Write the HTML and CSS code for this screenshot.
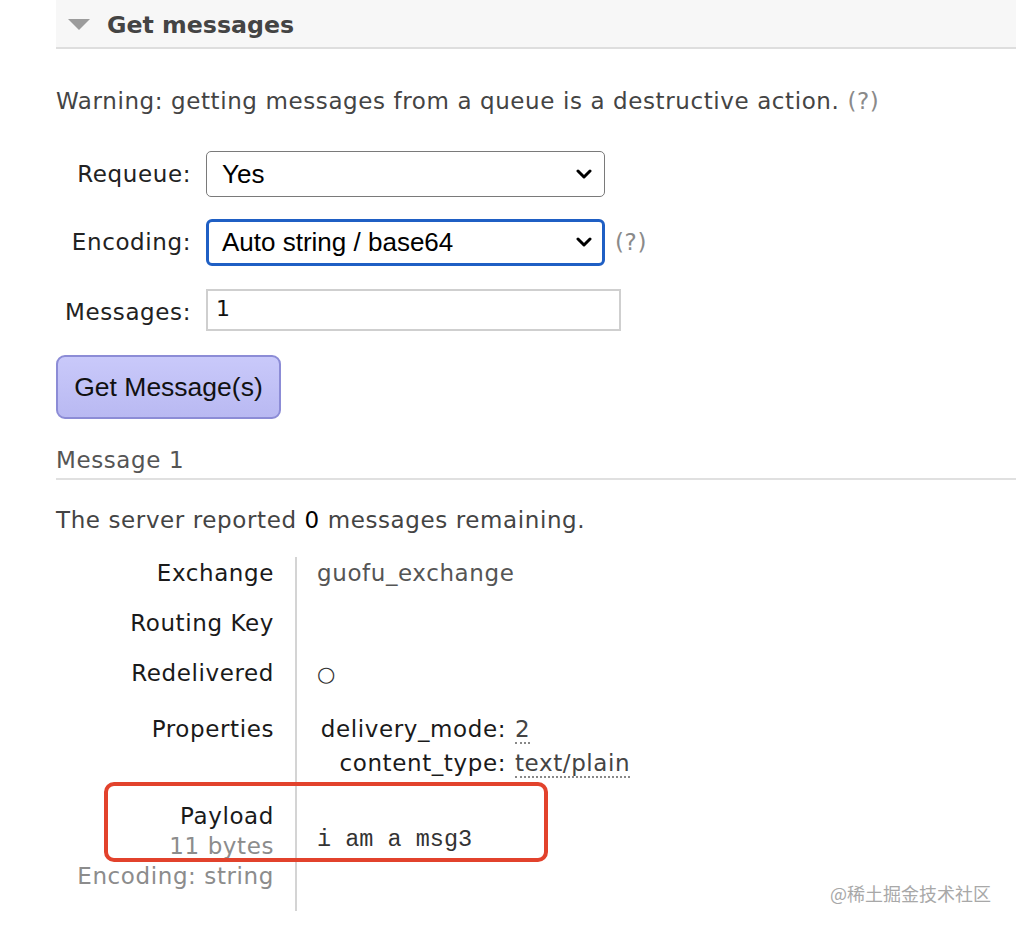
FILE: index.html
```html
<!DOCTYPE html>
<html>
<head>
<meta charset="utf-8">
<link rel="stylesheet" href="styles.css">
</head>
<body>
<div class="page">
  <h2 class="section-head"><span class="tri"></span>Get messages</h2>
  <p class="warning">Warning: getting messages from a queue is a destructive action. <span class="help">(?)</span></p>
  <div class="form">
    <label class="lbl">Requeue:</label>
    <div class="ctl"><div class="select"><span>Yes</span><svg class="chev" viewBox="0 0 16 10" width="16" height="10"><path d="M2 2 L8 8 L14 2" fill="none" stroke="#000" stroke-width="3" stroke-linecap="round" stroke-linejoin="round"/></svg></div></div>
    <label class="lbl">Encoding:</label>
    <div class="ctl"><div class="select focus"><span>Auto string / base64</span><svg class="chev" viewBox="0 0 16 10" width="16" height="10"><path d="M2 2 L8 8 L14 2" fill="none" stroke="#000" stroke-width="3" stroke-linecap="round" stroke-linejoin="round"/></svg></div><span class="help side">(?)</span></div>
    <label class="lbl lbl-msg">Messages:</label>
    <div class="ctl"><div class="input">1</div></div>
  </div>
  <button class="btn">Get Message(s)</button>
  <h3 class="msg-head">Message 1</h3>
  <p class="remaining">The server reported <b>0</b> messages remaining.</p>
  <div class="msg-table">
    <div class="row">
      <div class="k">Exchange</div>
      <div class="v">guofu_exchange</div>
    </div>
    <div class="row">
      <div class="k">Routing Key</div>
      <div class="v"></div>
    </div>
    <div class="row">
      <div class="k">Redelivered</div>
      <div class="v"><span class="circle">○</span></div>
    </div>
    <div class="row props">
      <div class="k">Properties</div>
      <div class="v">
        <div class="prop"><span class="pk">delivery_mode:</span><span class="pv"><abbr>2</abbr></span></div>
        <div class="prop"><span class="pk">content_type:</span><span class="pv"><abbr>text/plain</abbr></span></div>
      </div>
    </div>
    <div class="row payload">
      <div class="k">Payload<br><span class="sub">11 bytes</span><br><span class="sub">Encoding: string</span></div>
      <div class="v"><pre>i am a msg3</pre></div>
    </div>
    <div class="annot"></div>
  </div>
</div>
<div class="watermark">@稀土掘金技术社区</div>
</body>
</html>
```
FILE: styles.css
```css
html, body {
  margin: 0;
  padding: 0;
  background: #fff;
}
body {
  font-family: "DejaVu Sans", Verdana, sans-serif;
  font-size: 23px;
  letter-spacing: 0.6px;
  color: #444;
  position: relative;
  width: 1016px;
  height: 930px;
  overflow: hidden;
}
.page {
  padding-left: 56px;
}
.section-head {
  margin: 0;
  background: #f7f7f7;
  border-bottom: 2px solid #dedede;
  display: flex;
  align-items: center;
  font-size: 23.7px;
  letter-spacing: 0;
  font-weight: bold;
  color: #444;
  padding-left: 12px;
  padding-top: 3px;
  box-sizing: border-box;
  height: 49px;
}
.tri {
  width: 0;
  height: 0;
  border-left: 11px solid transparent;
  border-right: 11px solid transparent;
  border-top: 11px solid #9c9c9c;
  margin-right: 17px;
  margin-top: -1px;
}
.warning {
  margin: 37px 0 0;
  line-height: 30px;
  color: #444;
}
.help {
  color: #8a8a8a;
}
.form {
  margin-top: 35px;
  display: grid;
  grid-template-columns: 134px auto;
  column-gap: 16px;
  row-gap: 22px;
  align-items: center;
}
.lbl {
  text-align: right;
  color: #222;
  line-height: 30px;
  margin-right: -1px;
}
.lbl-msg {
  margin-top: 4px;
}
.ctl {
  height: 46px;
  display: flex;
  align-items: center;
}
.select {
  box-sizing: border-box;
  width: 399px;
  height: 46px;
  border: 1.5px solid #7a7a7a;
  border-radius: 5px;
  display: flex;
  align-items: center;
  justify-content: space-between;
  padding: 0 12px 0 15px;
  font-family: "Liberation Sans", Arial, sans-serif;
  font-size: 26px;
  letter-spacing: 0;
  color: #000;
}
.select.focus {
  border: 3px solid #1f5fc4;
  border-radius: 6px;
  height: 47px;
  padding-left: 13px;
  padding-right: 10px;
}
.chev {
  display: block;
}
.side {
  margin-left: 10px;
}
.input {
  box-sizing: border-box;
  width: 415px;
  height: 42px;
  border: 2px solid #cfcfcf;
  padding: 0 8px;
  display: flex;
  align-items: center;
  font-family: "DejaVu Sans", Verdana, sans-serif;
  font-size: 22px;
  color: #111;
  padding-bottom: 4px;
}
.btn {
  display: block;
  margin-top: 22px;
  width: 225px;
  height: 64px;
  border: 2px solid #8c8cd6;
  border-radius: 9px;
  background: linear-gradient(#c9c9fa, #b9b9f2);
  font-family: "Liberation Sans", Arial, sans-serif;
  font-size: 26.5px;
  letter-spacing: 0;
  color: #111;
  padding: 0;
}
.msg-head {
  margin: 26px 0 0;
  font-weight: normal;
  font-size: 23px;
  line-height: 30px;
  color: #555;
  padding-bottom: 3px;
  border-bottom: 2px solid #e0e0e0;
}
.remaining {
  margin: 25px 0 0;
  line-height: 30px;
  color: #444;
}
.remaining b {
  font-weight: normal;
  color: #000;
}
.msg-table {
  position: relative;
  margin-top: 22px;
}
.row {
  display: grid;
  grid-template-columns: 239px auto;
}
.k {
  text-align: right;
  padding: 1px 21px 19px 0;
  line-height: 30px;
  color: #1a1a1a;
}
.v {
  border-left: 2px solid #d4d4d4;
  padding: 1px 0 19px 20px;
  line-height: 30px;
  color: #555;
}
.circle {
  color: #333;
  font-size: 21px;
  letter-spacing: 0;
}
.props .k, .props .v {
  padding-top: 4px;
  padding-bottom: 17px;
}
.props .k,
.props .v {
  line-height: 34px;
}
.prop {
  display: grid;
  grid-template-columns: 189px auto;
  column-gap: 9px;
}
.pk {
  text-align: right;
  color: #1a1a1a;
}
.pv abbr {
  text-decoration: none;
  border-bottom: 2px dotted #888;
  color: #444;
}
.payload .k, .payload .v {
  padding-top: 4px;
  padding-bottom: 20px;
}
.sub {
  color: #8c8c8c;
}
pre {
  margin: 24px 0 0;
  font-family: "Liberation Mono", "Courier New", monospace;
  font-size: 23.5px;
  letter-spacing: 0;
  line-height: 30px;
  color: #333;
}
.annot {
  position: absolute;
  left: 48px;
  top: 225px;
  width: 444px;
  height: 80px;
  box-sizing: border-box;
  border: 4px solid #e2422c;
  border-radius: 10px;
}
.watermark {
  position: absolute;
  left: 830px;
  top: 880px;
  font-family: "Noto Sans CJK SC", sans-serif;
  font-size: 18px;
  letter-spacing: 0;
  line-height: 26px;
  color: #a8a8a8;
}
```
